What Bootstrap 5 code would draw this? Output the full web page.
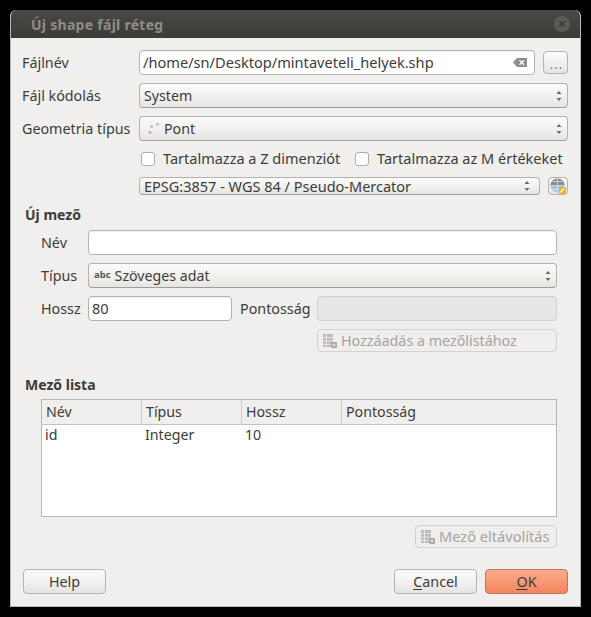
<!DOCTYPE html>
<html lang="hu">
<head>
  <meta charset="UTF-8">
  <title>Új shape fájl réteg</title>
  <meta name="viewport" content="width=device-width, initial-scale=1">
  <link href="https://cdn.jsdelivr.net/npm/bootstrap@5.3.3/dist/css/bootstrap.min.css" rel="stylesheet">
  <style>
    html, body { height: 100%; background: #000; }
    body { font-family: "Noto Sans", "Open Sans", sans-serif; font-size: 14.3px; color: #3c3c3c; padding: 10px; }
    .dlg { width: 571px; height: 597px; background: #f0efed; border-radius: 6px 6px 0 0; overflow: hidden; border: 1px solid #b9b7b3; border-top: 0; }
    .dlg-title { height: 28px; background: linear-gradient(#4a4945, #3c3b37); color: #8f8d87; font-weight: 700; font-size: 14px; letter-spacing: .28px; padding-left: 21px; margin: 0 -1px; }
    .dlg-close { width: 16px; height: 16px; border-radius: 50%; background: #5b5a56; margin-right: 11px; }
    .dlg-main { padding: 12px 12px 0 11px; }
    .lbl-main { width: 117px; flex: none; }
    .lbl-sub { width: 47px; flex: none; }
    .lbl-prec { width: 85px; padding-left: 8px; }
    .qt-input { height: 25px; background: #fff; border: 1px solid #b5b3ae; border-radius: 4px; padding: 0 3px; font-size: 14.6px; line-height: 23px; color: #3c3c3c; box-shadow: inset 0 1px 1px rgba(0,0,0,.05); }
    .qt-input.off { background: #e8e7e5; border-color: #d4d2cf; box-shadow: none; }
    .len-input { width: 144px; }
    .qt-combo { height: 25px; border: 1px solid #b5b3ae; border-bottom-color: #9f9d98; border-radius: 4px; padding: 0 4px; background: linear-gradient(#fbfbfa, #f1f0ee 55%, #e6e5e2); font-size: 14.2px; }
    .qt-combo.thin { height: 18px; font-size: 14.5px; line-height: 16px; }
    .qt-btn { border: 1px solid #b5b3ae; border-radius: 4px; background: linear-gradient(#fbfbfa, #f0efed 60%, #e4e3e0); color: #3c3c3c; font-size: 14.3px; padding: 0; height: 25px; }
    .qt-btn.off { height: 23px; color: #a5a4a1; background: #efeeec; border-color: #d4d2cf; padding-left: 4px; }
    .qt-btn.hot { background: linear-gradient(#fbab8b, #f4855f); border-color: #c2755a; }
    .btn-browse { width: 25px; height: 23px; }
    .btn-crs { width: 20px; height: 18px; }
    .btn-add { width: 240px; }
    .btn-del { width: 142px; font-size: 14.6px; }
    .foot-btn { width: 83px; }
    .foot-help { margin-left: 1px; }
    .arrows { margin-left: auto; flex: none; }
    .pt-icon { margin: 0 4px; }
    .abc-icon { font-size: 9.5px; font-weight: 700; color: #555; margin: 0 4px 0 1px; }
    .chk-row { height: 20px; margin: 8px 0 8px 117px; font-size: 14.5px; white-space: nowrap; }
    .chk-row .form-check-input { width: 14px; height: 14px; margin: 0 8px 0 2px; border-color: #aeaca7; border-radius: 3px; flex: none; }
    .chk-z { width: 190px; }
    .crs-row { margin-left: 117px; }
    .head-sec { height: 20px; line-height: 20px; font-weight: 700; font-size: 14px; margin-left: 3px; }
    .head-new { margin-top: 10px; }
    .head-list { margin-top: 23px; }
    .sec-body { margin-left: 19px; margin-right: 11px; }
    .sec-first { margin-top: 5px; }
    .sec-tbl { margin-top: 4px; }
    .field-tbl { width: 516px; height: 118px; background: #fff; border: 1px solid #b9b7b3; font-size: 14.2px; }
    .field-tbl .tbl-head { height: 25px; background: #f0efed; border-bottom: 1px solid #c3c1bd; }
    .field-tbl .tbl-head div { width: 100px; padding-left: 4px; border-right: 1px solid #d0cecb; line-height: 24px; }
    .field-tbl .tbl-head div:last-child { flex: 1; border-right: 0; }
    .field-tbl .tbl-row div { width: 100px; padding-left: 3px; line-height: 20px; }
    .foot-row { margin-top: 21px; }
    u { text-underline-offset: 2px; }
  </style>
</head>
<body>
  <div class="dlg d-flex flex-column">
    <!-- title bar -->
    <div class="dlg-title d-flex align-items-center justify-content-between">
      <span>Új shape fájl réteg</span>
      <span class="dlg-close d-flex align-items-center justify-content-center">
        <svg width="8" height="8" viewBox="0 0 8 8"><path d="M1.2 1.2l5.6 5.6M6.8 1.2l-5.6 5.6" stroke="#35342f" stroke-width="1.3"/></svg>
      </span>
    </div>

    <div class="dlg-main">
      <div class="d-flex align-items-center">
        <span class="lbl-main">Fájlnév</span>
        <div class="qt-input d-flex align-items-center flex-grow-1">
          <span>/home/sn/Desktop/mintaveteli_helyek.shp</span>
          <svg class="arrows me-1" width="14" height="11" viewBox="0 0 14 11"><path d="M0 5.5L4 1h10v9H4z" fill="#8f8e8b"/><path d="M6.5 3.2l4.5 4.5M11 3.2L6.5 7.7" stroke="#fff" stroke-width="1.3"/></svg>
        </div>
        <button class="qt-btn btn-browse ms-2">
          <svg width="12" height="14" viewBox="0 0 12 14"><circle cx="1.5" cy="11" r=".8" fill="#555"/><circle cx="6" cy="11" r=".8" fill="#555"/><circle cx="10.5" cy="11" r=".8" fill="#555"/></svg>
        </button>
      </div>

      <div class="d-flex align-items-center mt-2">
        <span class="lbl-main">Fájl kódolás</span>
        <div class="qt-combo d-flex align-items-center flex-grow-1">
          <span>System</span>
          <svg class="arrows" width="8" height="14" viewBox="0 0 8 14"><path d="M1.5 5L4 2l2.5 3zM1.5 9L4 12l2.5-3z" fill="#6a6a68"/></svg>
        </div>
      </div>

      <div class="d-flex align-items-center mt-2">
        <span class="lbl-main">Geometria típus</span>
        <div class="qt-combo d-flex align-items-center flex-grow-1">
          <svg class="pt-icon" width="12" height="12" viewBox="0 0 12 12"><g fill="#fff" stroke="#8a8a88" stroke-width=".8"><circle cx="2" cy="9.5" r="1"/><circle cx="3.5" cy="3.5" r="1"/><circle cx="9.5" cy="1.5" r="1"/></g></svg>
          <span>Pont</span>
          <svg class="arrows" width="8" height="14" viewBox="0 0 8 14"><path d="M1.5 5L4 2l2.5 3zM1.5 9L4 12l2.5-3z" fill="#6a6a68"/></svg>
        </div>
      </div>

      <div class="chk-row d-flex align-items-center">
        <input class="form-check-input" type="checkbox" id="chkZ">
        <label for="chkZ" class="chk-z">Tartalmazza a Z dimenziót</label>
        <input class="form-check-input" type="checkbox" id="chkM">
        <label for="chkM">Tartalmazza az M értékeket</label>
      </div>

      <div class="crs-row d-flex align-items-center">
        <div class="qt-combo thin d-flex align-items-center flex-grow-1">
          <span>EPSG:3857 - WGS 84 / Pseudo-Mercator</span>
          <svg class="arrows me-1" width="8" height="14" viewBox="0 0 8 14"><path d="M1.5 5L4 2l2.5 3zM1.5 9L4 12l2.5-3z" fill="#6a6a68"/></svg>
        </div>
        <button class="qt-btn btn-crs ms-2 d-flex align-items-center justify-content-center">
          <svg width="16" height="16" viewBox="0 0 16 16"><circle cx="7.5" cy="7.5" r="7" fill="#a9c3dc"/><path d="M.5 7.5a7 7 0 0 1 14 0z" fill="#8b8f93"/><path d="M1 7.5h13M7.5 .5v14M2.5 3.5h10M2.5 11.5h10" stroke="#dfe3e6" stroke-width=".7" fill="none"/><rect x="9" y="9" width="7" height="7" rx="1" fill="#e3b62c"/><path d="M10.5 14.5l3.5-4" stroke="#fff" stroke-width="1.2"/></svg>
        </button>
      </div>

      <div class="head-sec head-new">Új mező</div>
      <div class="sec-body">
        <div class="sec-first d-flex align-items-center">
          <span class="lbl-sub">Név</span>
          <div class="qt-input flex-grow-1"></div>
        </div>
        <div class="d-flex align-items-center mt-2">
          <span class="lbl-sub">Típus</span>
          <div class="qt-combo d-flex align-items-center flex-grow-1">
            <span class="abc-icon">abc</span>
            <span>Szöveges adat</span>
            <svg class="arrows" width="8" height="14" viewBox="0 0 8 14"><path d="M1.5 5L4 2l2.5 3zM1.5 9L4 12l2.5-3z" fill="#6a6a68"/></svg>
          </div>
        </div>
        <div class="d-flex align-items-center mt-2">
          <span class="lbl-sub">Hossz</span>
          <div class="qt-input len-input">80</div>
          <span class="lbl-prec">Pontosság</span>
          <div class="qt-input off flex-grow-1"></div>
        </div>
        <div class="d-flex justify-content-end mt-2">
          <button class="qt-btn off btn-add d-flex align-items-center">
            <svg class="me-1" width="15" height="15" viewBox="0 0 15 15"><rect x="1" y="1" width="10" height="13" fill="#bdbcb9"/><path d="M1 4.5h10M1 8h10M1 11.5h10M4.5 1v13" stroke="#efeeec" stroke-width=".8"/><rect x="9" y="9" width="6" height="6" rx="1" fill="#a9a8a5"/><path d="M10.5 12h3M12 10.5v3" stroke="#efeeec"/></svg>
            <span>Hozzáadás a mezőlistához</span>
          </button>
        </div>
      </div>

      <div class="head-sec head-list">Mező lista</div>
      <div class="sec-body sec-tbl">
        <div class="field-tbl">
          <div class="tbl-head d-flex">
            <div>Név</div><div>Típus</div><div>Hossz</div><div>Pontosság</div>
          </div>
          <div class="tbl-row d-flex">
            <div>id</div><div>Integer</div><div>10</div>
          </div>
        </div>
        <div class="d-flex justify-content-end mt-2">
          <button class="qt-btn off btn-del d-flex align-items-center">
            <svg class="me-1" width="15" height="15" viewBox="0 0 15 15"><rect x="1" y="1" width="10" height="13" fill="#bdbcb9"/><path d="M1 4.5h10M1 8h10M1 11.5h10M4.5 1v13" stroke="#efeeec" stroke-width=".8"/><rect x="9" y="9" width="6" height="6" rx="1" fill="#a9a8a5"/><path d="M10.5 10.5l3 3M13.5 10.5l-3 3" stroke="#efeeec"/></svg>
            <span>Mező eltávolítás</span>
          </button>
        </div>
      </div>

      <!-- bottom buttons -->
      <div class="foot-row d-flex">
        <button class="qt-btn foot-btn foot-help">Help</button>
        <button class="qt-btn foot-btn ms-auto"><u>C</u>ancel</button>
        <button class="qt-btn hot foot-btn ms-2"><u>O</u>K</button>
      </div>
    </div>
  </div>
  <script src="https://cdn.jsdelivr.net/npm/bootstrap@5.3.3/dist/js/bootstrap.bundle.min.js"></script>
</body>
</html>
